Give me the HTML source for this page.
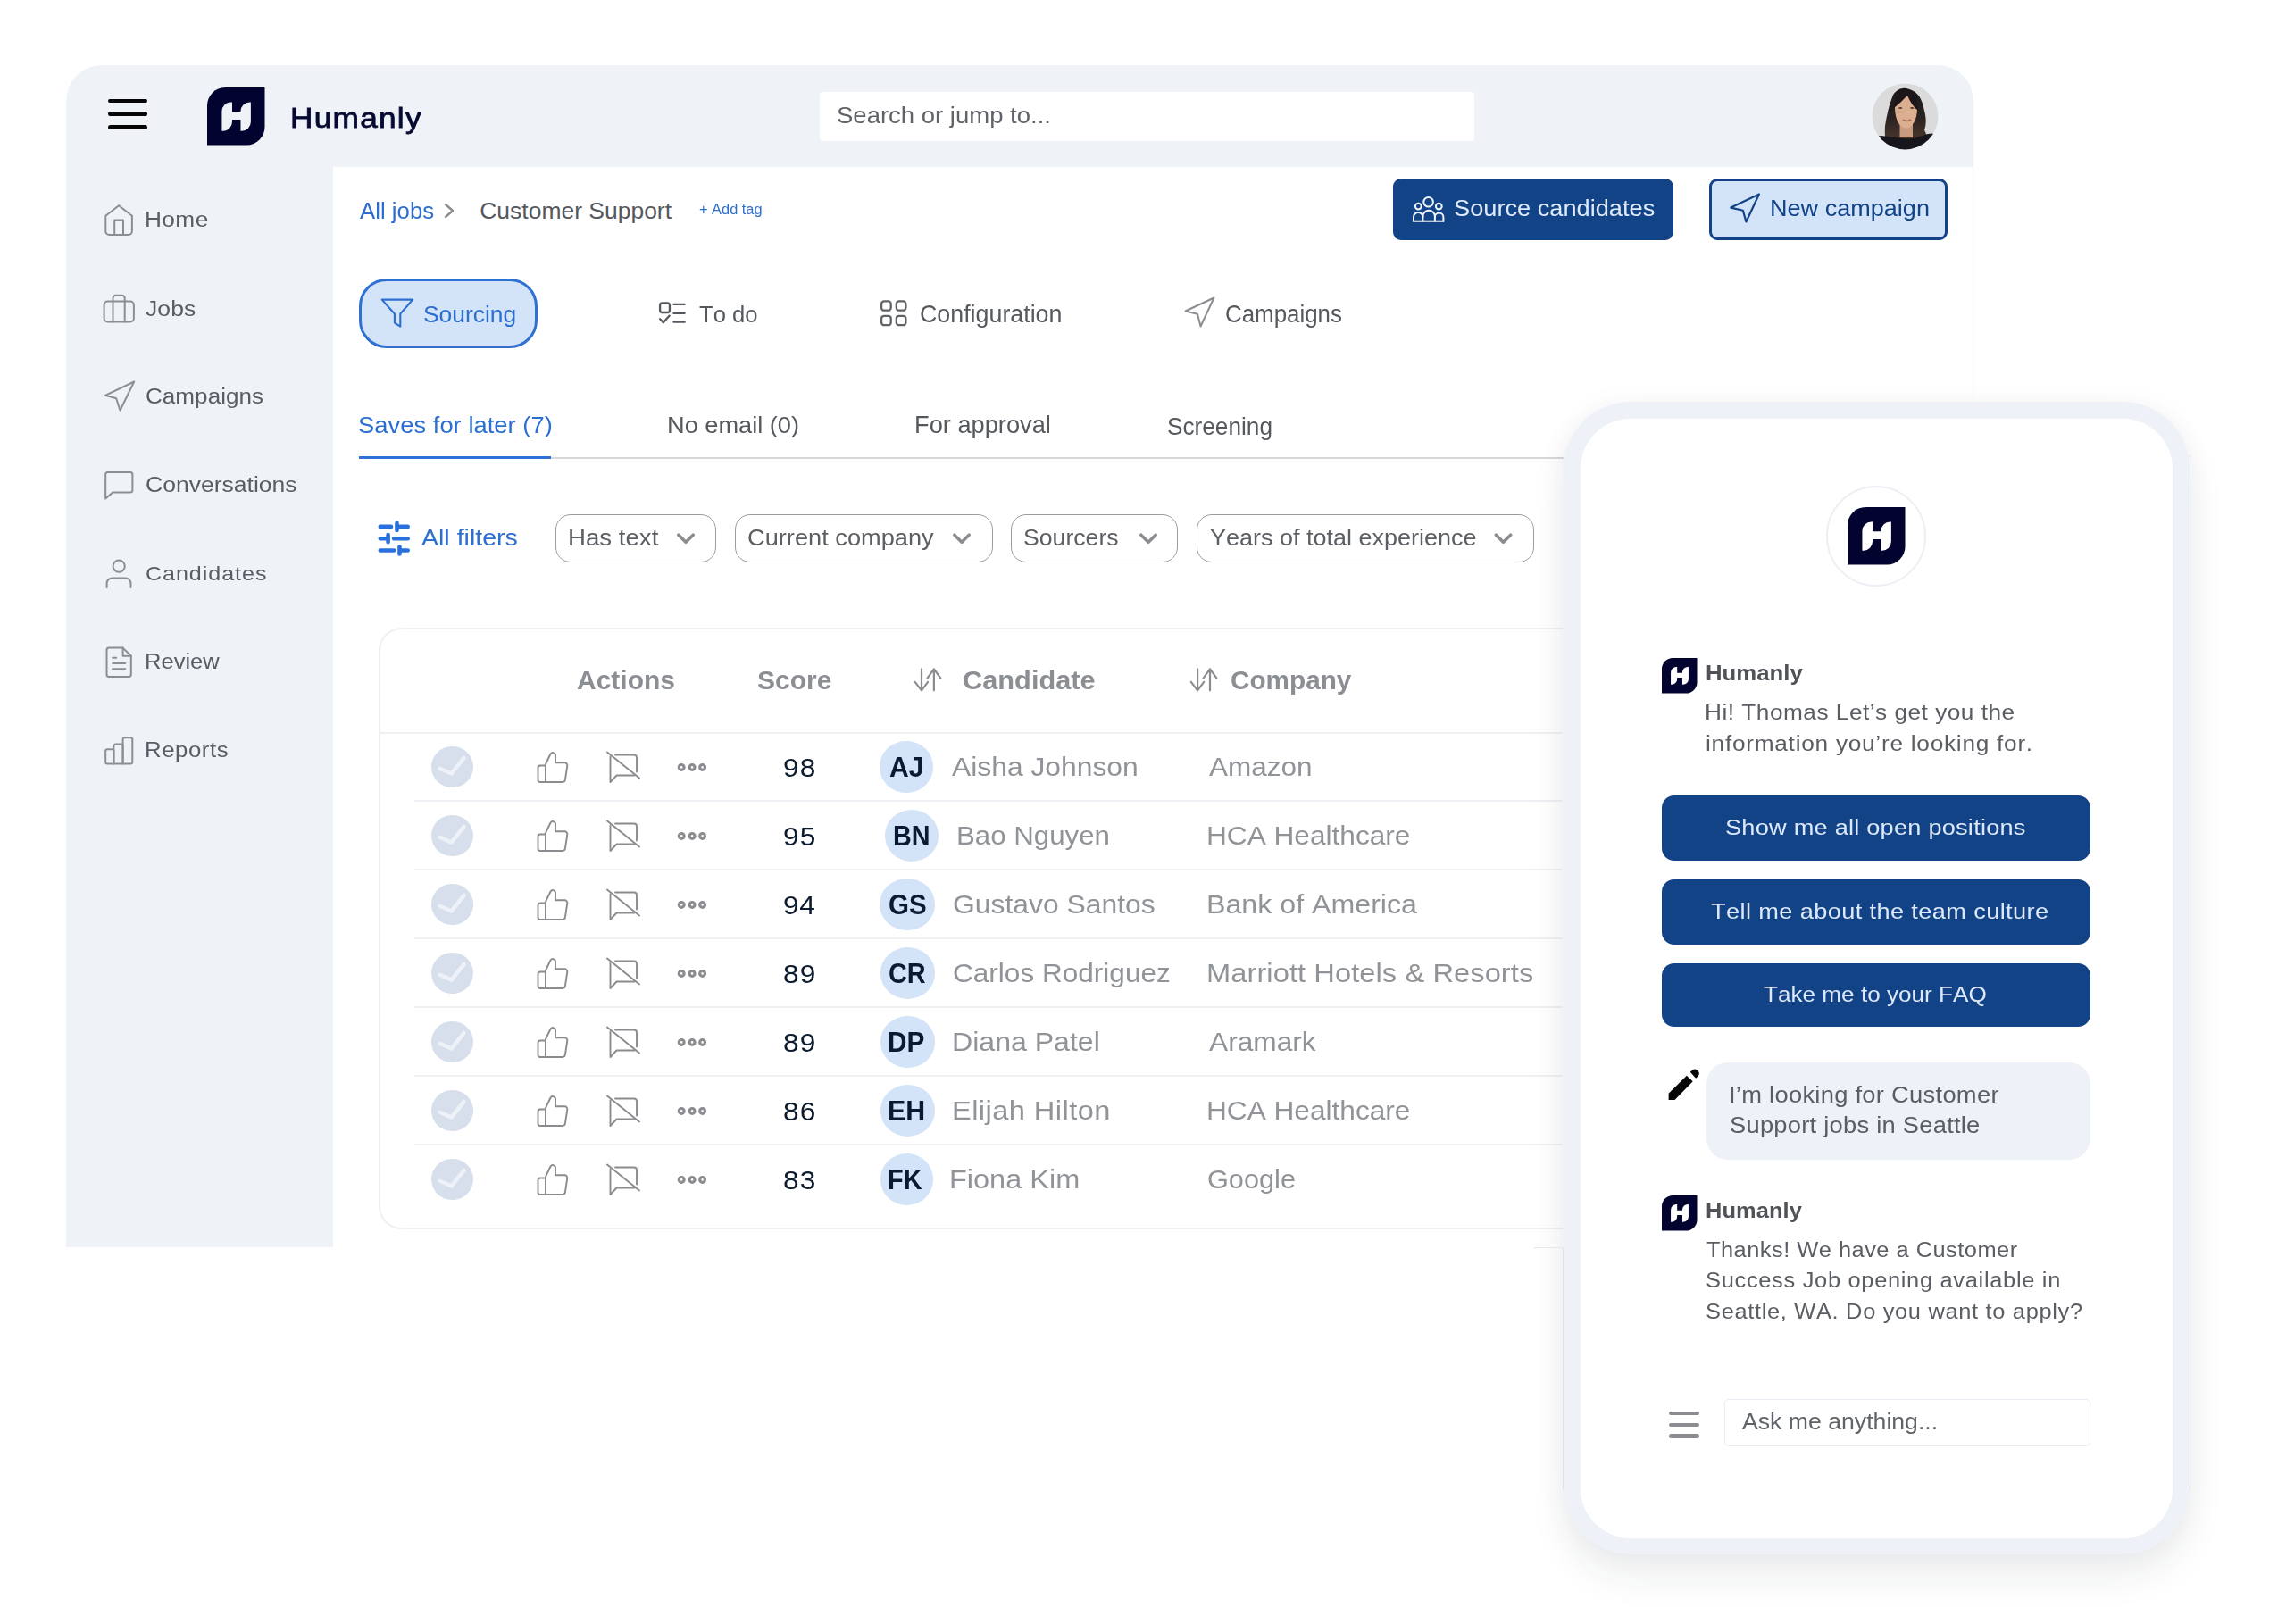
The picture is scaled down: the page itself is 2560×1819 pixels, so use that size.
<!DOCTYPE html>
<html><head><meta charset="utf-8"><title>Humanly</title>
<style>
html,body{margin:0;padding:0;background:#fff;}
body{width:2560px;height:1819px;position:relative;overflow:hidden;font-family:"Liberation Sans",sans-serif;font-kerning:none;}
.t{position:absolute;white-space:nowrap;line-height:1;transform-origin:0 0;}
.r{position:absolute;}
.s{position:absolute;left:0;top:0;overflow:visible;}
</style></head><body>
<div class="r" style="left:73.5px;top:73px;width:2136.0px;height:114px;background:#eff3f8;border-radius:40px 40px 0 0;"></div>
<div class="r" style="left:73.5px;top:186px;width:299.5px;height:1211px;background:#eff3f8;"></div>
<div class="r" style="left:2208.5px;top:187px;width:1.0px;height:263px;background:#f9fafb;"></div>
<div class="r" style="left:120.6px;top:110.6px;width:44.9px;height:4.8px;background:#060606;border-radius:3px;"></div>
<div class="r" style="left:120.6px;top:125.39999999999999px;width:44.9px;height:4.8px;background:#060606;border-radius:3px;"></div>
<div class="r" style="left:120.6px;top:140.4px;width:44.9px;height:4.8px;background:#060606;border-radius:3px;"></div>
<svg class="s" style="left:232.4px;top:98.1px" width="64.5" height="64.5" viewBox="0 0 64 64"><path d="M20 0H64V44A20 20 0 0 1 44 64H0V20A20 20 0 0 1 20 0Z" fill="#03032f"/><path d="M16.3 48.3V26.3A10 10 0 0 1 26.3 16.3H27.8V38.3A10 10 0 0 1 17.8 48.3Z M37.2 48.3V26.3A10 10 0 0 1 47.2 16.3H48.5V38.3A10 10 0 0 1 38.5 48.3Z M27 27.1H38V35.7H27Z" fill="#eff3f8"/></svg>
<div class="t" style="left:324.65px;top:116px;font-size:32.0px;letter-spacing:1.163px;color:#070a30;font-weight:normal;transform:scaleX(1.1);-webkit-text-stroke:0.8px #070a30;">Humanly</div>
<div class="r" style="left:918px;top:103.4px;width:732.7px;height:54.4px;background:#fff;border-radius:4px;"></div>
<div class="t" style="left:936.67px;top:117px;font-size:25.75px;letter-spacing:0.0px;color:#606468;font-weight:normal;transform:scaleX(1.0679);">Search or jump to...</div>
<svg class="s" style="left:2096px;top:93px" width="75" height="75" viewBox="0 0 75 75">
<defs><clipPath id="av"><circle cx="37.5" cy="37.4" r="37"/></clipPath>
<filter id="avb" x="-10%" y="-10%" width="120%" height="120%"><feGaussianBlur stdDeviation="0.55"/></filter>
<linearGradient id="hg" x1="0" y1="0" x2="0" y2="1"><stop offset="0" stop-color="#191719"/><stop offset="0.55" stop-color="#2a2220"/><stop offset="1" stop-color="#4a362d"/></linearGradient></defs>
<g clip-path="url(#av)">
<rect width="75" height="75" fill="#dbdbdb"/>
<g filter="url(#avb)">
<path d="M37 5.8C30 6 25 10 23 16C19 26 17 36 15 48C14.5 56 15 62 16 64L60 64C62 60 61 55 59 53C61.5 46 61 38 59 31C57 20 53 8 37 5.8Z" fill="url(#hg)"/>
<path d="M31.5 44H46V61H31.5Z" fill="#c99b7e"/>
<path d="M26 27C26 20 31 14 38 14C46 14 51 20 51 28C51 40 46 50.6 38.5 50.6C31 50.6 26 40 26 27Z" fill="#dcae90"/>
<path d="M25 28C25 18 30 11 37 10C45 10 51 16 52 24L52 31C47 27 43 21 40 14C35 19 30 24 25 28Z" fill="#1b181a"/>
<ellipse cx="32.2" cy="28" rx="2.2" ry="1.1" fill="#5a3d30"/><ellipse cx="45.3" cy="28" rx="2.2" ry="1.1" fill="#5a3d30"/>
<path d="M35 41Q39.5 44 44 41" stroke="#a86a58" stroke-width="1.6" fill="none"/>
<path d="M0 75V62C4 60 8 59 11 59C18 60 26 61 33 61.8C38 62.5 43 62.5 47.6 61.8C54 60 60 57 67 56.5C70 57 73 59 75 60V75Z" fill="#15171a"/>
</g></g></svg>
<div class="t" style="left:162.3px;top:234px;font-size:23.85px;letter-spacing:0.379px;color:#595d62;font-weight:normal;transform:scaleX(1.1);">Home</div>
<div class="t" style="left:163.45px;top:334px;font-size:24.15px;letter-spacing:0.083px;color:#595d62;font-weight:normal;transform:scaleX(1.1);">Jobs</div>
<div class="t" style="left:162.65px;top:432px;font-size:24.15px;letter-spacing:0.0px;color:#595d62;font-weight:normal;transform:scaleX(1.0813);">Campaigns</div>
<div class="t" style="left:162.63px;top:531px;font-size:24.15px;letter-spacing:0.0px;color:#595d62;font-weight:normal;transform:scaleX(1.0993);">Conversations</div>
<div class="t" style="left:162.93px;top:631px;font-size:22.84px;letter-spacing:0.848px;color:#595d62;font-weight:normal;transform:scaleX(1.1);">Candidates</div>
<div class="t" style="left:162.13px;top:730px;font-size:23.56px;letter-spacing:0.0px;color:#595d62;font-weight:normal;transform:scaleX(1.084);">Review</div>
<div class="t" style="left:162.1px;top:829px;font-size:23.42px;letter-spacing:0.523px;color:#595d62;font-weight:normal;transform:scaleX(1.1);">Reports</div>
<svg class="s" width="2560" height="1819" viewBox="0 0 2560 1819" fill="none" stroke="#8b8e92" stroke-width="2" stroke-linecap="round" stroke-linejoin="round" >
<path d="M118.3 241.7L133.1 230.3L147.9 241.7V259A4 4 0 0 1 143.9 263H122.3A4 4 0 0 1 118.3 259Z"/>
<path d="M128.2 263V246.6H138V263"/>
<rect x="116.6" y="337.5" width="33.3" height="23" rx="4"/>
<path d="M126.5 360.5V334A3.2 3.2 0 0 1 129.7 330.8H136.5A3.2 3.2 0 0 1 139.7 334V360.5"/>
<path d="M150.2 427.5L117.9 442.8L130.2 446.2L134.5 459.8Z"/>
<path d="M118.2 558.6V531.6A2.5 2.5 0 0 1 120.7 529.1H145.9A2.5 2.5 0 0 1 148.4 531.6V549.1A2.5 2.5 0 0 1 145.9 551.6H126.2Z"/>
<circle cx="133.2" cy="634.2" r="6.6"/>
<path d="M119.6 658V653.5A6 6 0 0 1 125.6 647.5H140.5A6 6 0 0 1 146.5 653.5V658"/>
<path d="M137.6 725.6H122A2.5 2.5 0 0 0 119.5 728.1V755.4A2.5 2.5 0 0 0 122 757.9H144.3A2.5 2.5 0 0 0 146.8 755.4V734.8Z"/>
<path d="M137.6 725.6V734.8H146.8"/>
<path d="M126.1 736.7H130.2M126.1 743.1H140.3M126.1 749.2H140.3"/>
<path d="M120.2 855.4A2 2 0 0 1 118.2 853.4V841.2A2 2 0 0 1 120.2 839.2H125.4A2 2 0 0 1 127.4 841.2V855.4Z"/>
<path d="M127.4 855.4V835.6A2 2 0 0 1 129.4 833.6H135.6A2 2 0 0 1 137.6 835.6V855.4Z"/>
<path d="M137.6 855.4V828.2A2 2 0 0 1 139.6 826.2H146.3A2 2 0 0 1 148.3 828.2V853.4A2 2 0 0 1 146.3 855.4Z"/>
</svg>
<div class="t" style="left:402.7px;top:223px;font-size:26.47px;letter-spacing:0.0px;color:#2d6fd0;font-weight:normal;transform:scaleX(0.974);">All jobs</div>
<svg class="s" width="2560" height="1819" viewBox="0 0 2560 1819" fill="none" stroke="#8a8c90" stroke-width="2.4" stroke-linecap="round" stroke-linejoin="round" ><path d="M499 229L507 236L499 243"/></svg>
<div class="t" style="left:537.25px;top:223px;font-size:26.47px;letter-spacing:0.0px;color:#55595e;font-weight:normal;">Customer Support</div>
<div class="t" style="left:783.02px;top:227px;font-size:15.85px;letter-spacing:0.0px;color:#2d6fd0;font-weight:normal;transform:scaleX(1.0333);">+ Add tag</div>
<div class="r" style="left:1560px;top:200px;width:314.4px;height:68.8px;background:#124387;border-radius:9px;"></div>
<svg class="s" width="2560" height="1819" viewBox="0 0 2560 1819" fill="none" stroke="#eef4fb" stroke-width="2" stroke-linecap="round" stroke-linejoin="round" ><circle cx="1599.6" cy="226.2" r="5.3"/><circle cx="1588.3" cy="231.1" r="3.4"/><circle cx="1611.3" cy="231.1" r="3.4"/>
<path d="M1593.4 247.7V242.55A6.75 6.75 0 0 1 1606.9 242.55V247.7"/>
<path d="M1583 247.7V243.2A5.2 5.2 0 0 1 1593.4 243.2"/>
<path d="M1606.9 243.2A4.75 4.75 0 0 1 1616.4 243.2V247.7"/>
<path d="M1583 247.7H1616.4"/></svg>
<div class="t" style="left:1628.39px;top:221px;font-size:25.89px;letter-spacing:0.0px;color:#dfeaf8;font-weight:normal;transform:scaleX(1.0509);">Source candidates</div>
<div class="r" style="left:1914px;top:200px;width:266.8px;height:68.8px;background:#d3e3f8;border:3px solid #124387;border-radius:9px;box-sizing:border-box;"></div>
<svg class="s" width="2560" height="1819" viewBox="0 0 2560 1819" fill="none" stroke="#124387" stroke-width="2.2" stroke-linecap="round" stroke-linejoin="round" ><path d="M1969.9 217.5L1938.3 232.6L1951.9 235.8L1955.4 248.5Z"/></svg>
<div class="t" style="left:1982.49px;top:221px;font-size:25.6px;letter-spacing:0.0px;color:#124387;font-weight:normal;transform:scaleX(1.057);">New campaign</div>
<div class="r" style="left:402px;top:311.7px;width:199.8px;height:78.0px;background:#d3e3f8;border:3px solid #2f70d2;border-radius:31px;box-sizing:border-box;"></div>
<svg class="s" width="2560" height="1819" viewBox="0 0 2560 1819" fill="none" stroke="#2c6fd1" stroke-width="2.1" stroke-linecap="round" stroke-linejoin="round" ><path d="M427.7 335.6H462.2L448.3 351.5V365.6L441.9 361.6V351.5Z"/></svg>
<div class="t" style="left:474.25px;top:339px;font-size:26.47px;letter-spacing:0.0px;color:#2d6fd0;font-weight:normal;transform:scaleX(0.998);">Sourcing</div>
<svg class="s" width="2560" height="1819" viewBox="0 0 2560 1819" fill="none" stroke="#55595e" stroke-width="2.3" stroke-linecap="round" stroke-linejoin="round" ><rect x="739.1" y="339.4" width="10.85" height="10.6" rx="2.5"/>
<path d="M739.1 357.3L742.8 361.3L749.7 353.6"/>
<path d="M754.4 340.8H766.7M754.4 350.8H766.7M754.4 360.7H766.7"/></svg>
<div class="t" style="left:783.32px;top:339px;font-size:26.47px;letter-spacing:0.0px;color:#55595e;font-weight:normal;transform:scaleX(0.9691);">To do</div>
<svg class="s" width="2560" height="1819" viewBox="0 0 2560 1819" fill="none" stroke="#5f6266" stroke-width="2.3" stroke-linecap="round" stroke-linejoin="round" ><rect x="987.1" y="337.4" width="10.6" height="10.3" rx="3"/><rect x="1003.8" y="337.4" width="10.6" height="10.3" rx="3"/>
<rect x="987.1" y="353.8" width="10.6" height="10.4" rx="3"/><rect x="1003.8" y="353.8" width="10.6" height="10.4" rx="3"/></svg>
<div class="t" style="left:1030.15px;top:339px;font-size:26.91px;letter-spacing:0.0px;color:#55595e;font-weight:normal;transform:scaleX(0.9962);">Configuration</div>
<svg class="s" width="2560" height="1819" viewBox="0 0 2560 1819" fill="none" stroke="#8a8c90" stroke-width="2" stroke-linecap="round" stroke-linejoin="round" ><path d="M1359.5 333.5L1327.5 348.5L1341 351.8L1344.5 365.5Z"/></svg>
<div class="t" style="left:1371.7px;top:339px;font-size:26.91px;letter-spacing:0.0px;color:#55595e;font-weight:normal;transform:scaleX(0.9616);">Campaigns</div>
<div class="r" style="left:402px;top:512px;width:1349px;height:2px;background:#d6d7d9;"></div>
<div class="r" style="left:402px;top:511px;width:215px;height:3px;background:#2e70d8;"></div>
<div class="t" style="left:400.92px;top:464px;font-size:24.87px;letter-spacing:0.025px;color:#2d6fd0;font-weight:normal;transform:scaleX(1.1);">Saves for later (7)</div>
<div class="t" style="left:747.41px;top:464px;font-size:24.87px;letter-spacing:0.0px;color:#55595e;font-weight:normal;transform:scaleX(1.0933);">No email (0)</div>
<div class="t" style="left:1024.23px;top:463px;font-size:27.05px;letter-spacing:0.0px;color:#55595e;font-weight:normal;transform:scaleX(1.0068);">For approval</div>
<div class="t" style="left:1307.08px;top:465px;font-size:26.91px;letter-spacing:0.0px;color:#55595e;font-weight:normal;transform:scaleX(0.9738);">Screening</div>
<svg class="s" width="2560" height="1819" viewBox="0 0 2560 1819" fill="none" stroke="#2a70dd" stroke-width="4.6" stroke-linecap="round" stroke-linejoin="round" ><path d="M425.8 589.9H438M444.5 589.9H456.7M444.5 585.8V594"/>
<path d="M425.8 603.3H434.6M441.1 603.3H456.7M434.6 599V607.2"/>
<path d="M425.8 616.5H441.1M447.5 616.5H456.7M447.5 612.6V620.4"/></svg>
<div class="t" style="left:471.8px;top:589px;font-size:26.18px;letter-spacing:0.0px;color:#2d6fd0;font-weight:normal;transform:scaleX(1.0901);">All filters</div>
<div class="r" style="left:622px;top:576.4px;width:180.2px;height:53.6px;border:1.6px solid #9c9c9c;border-radius:17px;box-sizing:border-box;"></div>
<div class="t" style="left:636.03px;top:589px;font-size:26.18px;letter-spacing:0.0px;color:#5c6064;font-weight:normal;transform:scaleX(1.0553);">Has text</div>
<svg class="s" width="2560" height="1819" viewBox="0 0 2560 1819" fill="none" stroke="#8a8c90" stroke-width="3.6" stroke-linecap="round" stroke-linejoin="round" ><path d="M759.8 599.2L768 607.2L776.2 599.2"/></svg>
<div class="r" style="left:822.7px;top:576.4px;width:289.1px;height:53.6px;border:1.6px solid #9c9c9c;border-radius:17px;box-sizing:border-box;"></div>
<div class="t" style="left:837.4px;top:589px;font-size:26.18px;letter-spacing:-0.0px;color:#5c6064;font-weight:normal;transform:scaleX(1.0395);">Current company</div>
<svg class="s" width="2560" height="1819" viewBox="0 0 2560 1819" fill="none" stroke="#8a8c90" stroke-width="3.6" stroke-linecap="round" stroke-linejoin="round" ><path d="M1068.8 599.2L1077 607.2L1085.2 599.2"/></svg>
<div class="r" style="left:1132.1px;top:576.4px;width:187.1px;height:53.6px;border:1.6px solid #9c9c9c;border-radius:17px;box-sizing:border-box;"></div>
<div class="t" style="left:1146.13px;top:589px;font-size:26.18px;letter-spacing:0.0px;color:#5c6064;font-weight:normal;transform:scaleX(1.0175);">Sourcers</div>
<svg class="s" width="2560" height="1819" viewBox="0 0 2560 1819" fill="none" stroke="#8a8c90" stroke-width="3.6" stroke-linecap="round" stroke-linejoin="round" ><path d="M1277.8 599.2L1286 607.2L1294.2 599.2"/></svg>
<div class="r" style="left:1340px;top:576.4px;width:378.2px;height:53.6px;border:1.6px solid #9c9c9c;border-radius:17px;box-sizing:border-box;"></div>
<div class="t" style="left:1354.53px;top:589px;font-size:26.18px;letter-spacing:0.0px;color:#5c6064;font-weight:normal;transform:scaleX(1.0308);">Years of total experience</div>
<svg class="s" width="2560" height="1819" viewBox="0 0 2560 1819" fill="none" stroke="#8a8c90" stroke-width="3.6" stroke-linecap="round" stroke-linejoin="round" ><path d="M1675.3 599.2L1683.5 607.2L1691.7 599.2"/></svg>
<div class="r" style="left:423.9px;top:702.9px;width:1426.1px;height:674.2px;border:2px solid #eef0f4;border-radius:26px;box-sizing:border-box;"></div>
<div class="r" style="left:425px;top:819.5px;width:1324px;height:2.0px;background:#eef0f4;"></div>
<div class="t" style="left:645.72px;top:748px;font-size:28.8px;letter-spacing:0.0px;color:#8b8e92;font-weight:bold;transform:scaleX(1.0415);">Actions</div>
<div class="t" style="left:848.42px;top:748px;font-size:28.8px;letter-spacing:0.0px;color:#8b8e92;font-weight:bold;transform:scaleX(1.0415);">Score</div>
<div class="t" style="left:1078.23px;top:747px;font-size:30.25px;letter-spacing:0.0px;color:#8b8e92;font-weight:bold;transform:scaleX(1.0167);">Candidate</div>
<div class="t" style="left:1378.17px;top:747px;font-size:30.25px;letter-spacing:0.0px;color:#8b8e92;font-weight:bold;transform:scaleX(0.9824);">Company</div>
<svg class="s" width="2560" height="1819" viewBox="0 0 2560 1819" fill="none" stroke="#8a8c90" stroke-width="2.2" stroke-linecap="round" stroke-linejoin="round" ><path d="M1032 749.4V773.3M1024.7 763.8L1032 773.3L1039.1 763.8M1045.9 773.3V749.4M1038.6 759.4L1045.9 749.4L1053.2 759.4"/>
<path d="M1341.1 749.4V773.3M1333.8 763.8L1341.1 773.3L1348.2 763.8M1355 773.3V749.4M1347.7 759.4L1355 749.4L1362.3 759.4"/></svg>
<div class="r" style="left:463.9px;top:896px;width:1285.1px;height:2px;background:#eef0f4;"></div>
<div class="r" style="left:483.3px;top:835.7px;width:46.6px;height:46.6px;border-radius:50%;background:#d6dfeb;"></div>
<svg class="s" width="2560" height="1819" viewBox="0 0 2560 1819" fill="none" stroke="#eef2f8" stroke-width="4.5" stroke-linecap="round" stroke-linejoin="round" ><path d="M492.5 860.8L505.5 866.5L519.5 849" /></svg>
<svg class="s" width="2560" height="1819" viewBox="0 0 2560 1819" fill="none" stroke="#8a8c90" stroke-width="1.9" stroke-linecap="round" stroke-linejoin="round" ><path d="M602.5 860A2.5 2.5 0 0 1 605 857.5H611V876H605A2.5 2.5 0 0 1 602.5 873.5Z"/><path d="M611 876V856L616.5 844.5A3 3 0 0 1 622 846.5V854.3H632.5A2.8 2.8 0 0 1 635.3 857.5L633 873A3.3 3.3 0 0 1 629.7 876Z"/></svg>
<svg class="s" width="2560" height="1819" viewBox="0 0 2560 1819" fill="none" stroke="#8a8c90" stroke-width="1.9" stroke-linecap="round" stroke-linejoin="round" ><path d="M680 842.5L716 871.5"/><path d="M683.5 847.5V876L690.5 868.5H710.5"/><path d="M689 845.5H710A3 3 0 0 1 713 848.5V864.5"/></svg>
<svg class="s" width="2560" height="1819" viewBox="0 0 2560 1819" fill="none" stroke="#8a8c90" stroke-width="3.2" stroke-linecap="round" stroke-linejoin="round" ><circle cx="763.2" cy="859.4" r="2.9"/><circle cx="775.1" cy="859.4" r="2.9"/><circle cx="786.6" cy="859.4" r="2.9"/></svg>
<div class="t" style="left:876.52px;top:846px;font-size:28.8px;letter-spacing:1.136px;color:#0d1b2e;font-weight:normal;transform:scaleX(1.1);">98</div>
<div class="r" style="left:985.4px;top:830.4px;width:59.2px;height:57.2px;border-radius:50%;background:#d3e3f8;"></div>
<div class="t" style="left:995.77px;top:844px;font-size:31.13px;letter-spacing:0.0px;color:#0b1a33;font-weight:bold;transform:scaleX(0.9676);">AJ</div>
<div class="t" style="left:1066.0px;top:844px;font-size:29.67px;letter-spacing:0.0px;color:#909397;font-weight:normal;transform:scaleX(1.0729);">Aisha Johnson</div>
<div class="t" style="left:1353.5px;top:844px;font-size:29.67px;letter-spacing:0.0px;color:#909397;font-weight:normal;transform:scaleX(1.0629);">Amazon</div>
<div class="r" style="left:463.9px;top:973px;width:1285.1px;height:2px;background:#eef0f4;"></div>
<div class="r" style="left:483.3px;top:912.7px;width:46.6px;height:46.6px;border-radius:50%;background:#d6dfeb;"></div>
<svg class="s" width="2560" height="1819" viewBox="0 0 2560 1819" fill="none" stroke="#eef2f8" stroke-width="4.5" stroke-linecap="round" stroke-linejoin="round" ><path d="M492.5 937.8L505.5 943.5L519.5 926" /></svg>
<svg class="s" width="2560" height="1819" viewBox="0 0 2560 1819" fill="none" stroke="#8a8c90" stroke-width="1.9" stroke-linecap="round" stroke-linejoin="round" ><path d="M602.5 937A2.5 2.5 0 0 1 605 934.5H611V953H605A2.5 2.5 0 0 1 602.5 950.5Z"/><path d="M611 953V933L616.5 921.5A3 3 0 0 1 622 923.5V931.3H632.5A2.8 2.8 0 0 1 635.3 934.5L633 950A3.3 3.3 0 0 1 629.7 953Z"/></svg>
<svg class="s" width="2560" height="1819" viewBox="0 0 2560 1819" fill="none" stroke="#8a8c90" stroke-width="1.9" stroke-linecap="round" stroke-linejoin="round" ><path d="M680 919.5L716 948.5"/><path d="M683.5 924.5V953L690.5 945.5H710.5"/><path d="M689 922.5H710A3 3 0 0 1 713 925.5V941.5"/></svg>
<svg class="s" width="2560" height="1819" viewBox="0 0 2560 1819" fill="none" stroke="#8a8c90" stroke-width="3.2" stroke-linecap="round" stroke-linejoin="round" ><circle cx="763.2" cy="936.4" r="2.9"/><circle cx="775.1" cy="936.4" r="2.9"/><circle cx="786.6" cy="936.4" r="2.9"/></svg>
<div class="t" style="left:876.52px;top:923px;font-size:28.8px;letter-spacing:1.136px;color:#0d1b2e;font-weight:normal;transform:scaleX(1.1);">95</div>
<div class="r" style="left:990.8px;top:907.4px;width:60.6px;height:57.2px;border-radius:50%;background:#d3e3f8;"></div>
<div class="t" style="left:1000.35px;top:921px;font-size:31.13px;letter-spacing:0.0px;color:#0b1a33;font-weight:bold;transform:scaleX(0.9244);">BN</div>
<div class="t" style="left:1071.07px;top:921px;font-size:29.67px;letter-spacing:0.0px;color:#909397;font-weight:normal;transform:scaleX(1.0533);">Bao Nguyen</div>
<div class="t" style="left:1350.83px;top:921px;font-size:29.67px;letter-spacing:-0.0px;color:#909397;font-weight:normal;transform:scaleX(1.066);">HCA Healthcare</div>
<div class="r" style="left:463.9px;top:1050px;width:1285.1px;height:2px;background:#eef0f4;"></div>
<div class="r" style="left:483.3px;top:989.7px;width:46.6px;height:46.6px;border-radius:50%;background:#d6dfeb;"></div>
<svg class="s" width="2560" height="1819" viewBox="0 0 2560 1819" fill="none" stroke="#eef2f8" stroke-width="4.5" stroke-linecap="round" stroke-linejoin="round" ><path d="M492.5 1014.8L505.5 1020.5L519.5 1003" /></svg>
<svg class="s" width="2560" height="1819" viewBox="0 0 2560 1819" fill="none" stroke="#8a8c90" stroke-width="1.9" stroke-linecap="round" stroke-linejoin="round" ><path d="M602.5 1014A2.5 2.5 0 0 1 605 1011.5H611V1030H605A2.5 2.5 0 0 1 602.5 1027.5Z"/><path d="M611 1030V1010L616.5 998.5A3 3 0 0 1 622 1000.5V1008.3H632.5A2.8 2.8 0 0 1 635.3 1011.5L633 1027A3.3 3.3 0 0 1 629.7 1030Z"/></svg>
<svg class="s" width="2560" height="1819" viewBox="0 0 2560 1819" fill="none" stroke="#8a8c90" stroke-width="1.9" stroke-linecap="round" stroke-linejoin="round" ><path d="M680 996.5L716 1025.5"/><path d="M683.5 1001.5V1030L690.5 1022.5H710.5"/><path d="M689 999.5H710A3 3 0 0 1 713 1002.5V1018.5"/></svg>
<svg class="s" width="2560" height="1819" viewBox="0 0 2560 1819" fill="none" stroke="#8a8c90" stroke-width="3.2" stroke-linecap="round" stroke-linejoin="round" ><circle cx="763.2" cy="1013.4" r="2.9"/><circle cx="775.1" cy="1013.4" r="2.9"/><circle cx="786.6" cy="1013.4" r="2.9"/></svg>
<div class="t" style="left:876.52px;top:1000px;font-size:28.8px;letter-spacing:0.636px;color:#0d1b2e;font-weight:normal;transform:scaleX(1.1);">94</div>
<div class="r" style="left:985.4px;top:984.4px;width:61.4px;height:57.2px;border-radius:50%;background:#d3e3f8;"></div>
<div class="t" style="left:994.62px;top:998px;font-size:31.13px;letter-spacing:0.0px;color:#0b1a33;font-weight:bold;transform:scaleX(0.9474);">GS</div>
<div class="t" style="left:1066.89px;top:998px;font-size:29.67px;letter-spacing:-0.0px;color:#909397;font-weight:normal;transform:scaleX(1.0742);">Gustavo Santos</div>
<div class="t" style="left:1350.79px;top:998px;font-size:29.67px;letter-spacing:-0.0px;color:#909397;font-weight:normal;transform:scaleX(1.0846);">Bank of America</div>
<div class="r" style="left:463.9px;top:1127px;width:1285.1px;height:2px;background:#eef0f4;"></div>
<div class="r" style="left:483.3px;top:1066.7px;width:46.6px;height:46.6px;border-radius:50%;background:#d6dfeb;"></div>
<svg class="s" width="2560" height="1819" viewBox="0 0 2560 1819" fill="none" stroke="#eef2f8" stroke-width="4.5" stroke-linecap="round" stroke-linejoin="round" ><path d="M492.5 1091.8L505.5 1097.5L519.5 1080" /></svg>
<svg class="s" width="2560" height="1819" viewBox="0 0 2560 1819" fill="none" stroke="#8a8c90" stroke-width="1.9" stroke-linecap="round" stroke-linejoin="round" ><path d="M602.5 1091A2.5 2.5 0 0 1 605 1088.5H611V1107H605A2.5 2.5 0 0 1 602.5 1104.5Z"/><path d="M611 1107V1087L616.5 1075.5A3 3 0 0 1 622 1077.5V1085.3H632.5A2.8 2.8 0 0 1 635.3 1088.5L633 1104A3.3 3.3 0 0 1 629.7 1107Z"/></svg>
<svg class="s" width="2560" height="1819" viewBox="0 0 2560 1819" fill="none" stroke="#8a8c90" stroke-width="1.9" stroke-linecap="round" stroke-linejoin="round" ><path d="M680 1073.5L716 1102.5"/><path d="M683.5 1078.5V1107L690.5 1099.5H710.5"/><path d="M689 1076.5H710A3 3 0 0 1 713 1079.5V1095.5"/></svg>
<svg class="s" width="2560" height="1819" viewBox="0 0 2560 1819" fill="none" stroke="#8a8c90" stroke-width="3.2" stroke-linecap="round" stroke-linejoin="round" ><circle cx="763.2" cy="1090.4" r="2.9"/><circle cx="775.1" cy="1090.4" r="2.9"/><circle cx="786.6" cy="1090.4" r="2.9"/></svg>
<div class="t" style="left:876.52px;top:1077px;font-size:28.8px;letter-spacing:1.136px;color:#0d1b2e;font-weight:normal;transform:scaleX(1.1);">89</div>
<div class="r" style="left:985.5px;top:1061.4px;width:61.3px;height:57.2px;border-radius:50%;background:#d3e3f8;"></div>
<div class="t" style="left:994.84px;top:1075px;font-size:31.13px;letter-spacing:0.0px;color:#0b1a33;font-weight:bold;transform:scaleX(0.9279);">CR</div>
<div class="t" style="left:1066.9px;top:1075px;font-size:29.67px;letter-spacing:0.0px;color:#909397;font-weight:normal;transform:scaleX(1.0639);">Carlos Rodriguez</div>
<div class="t" style="left:1350.75px;top:1075px;font-size:29.67px;letter-spacing:0.071px;color:#909397;font-weight:normal;transform:scaleX(1.1);">Marriott Hotels &amp; Resorts</div>
<div class="r" style="left:463.9px;top:1204px;width:1285.1px;height:2px;background:#eef0f4;"></div>
<div class="r" style="left:483.3px;top:1143.7px;width:46.6px;height:46.6px;border-radius:50%;background:#d6dfeb;"></div>
<svg class="s" width="2560" height="1819" viewBox="0 0 2560 1819" fill="none" stroke="#eef2f8" stroke-width="4.5" stroke-linecap="round" stroke-linejoin="round" ><path d="M492.5 1168.8L505.5 1174.5L519.5 1157" /></svg>
<svg class="s" width="2560" height="1819" viewBox="0 0 2560 1819" fill="none" stroke="#8a8c90" stroke-width="1.9" stroke-linecap="round" stroke-linejoin="round" ><path d="M602.5 1168A2.5 2.5 0 0 1 605 1165.5H611V1184H605A2.5 2.5 0 0 1 602.5 1181.5Z"/><path d="M611 1184V1164L616.5 1152.5A3 3 0 0 1 622 1154.5V1162.3H632.5A2.8 2.8 0 0 1 635.3 1165.5L633 1181A3.3 3.3 0 0 1 629.7 1184Z"/></svg>
<svg class="s" width="2560" height="1819" viewBox="0 0 2560 1819" fill="none" stroke="#8a8c90" stroke-width="1.9" stroke-linecap="round" stroke-linejoin="round" ><path d="M680 1150.5L716 1179.5"/><path d="M683.5 1155.5V1184L690.5 1176.5H710.5"/><path d="M689 1153.5H710A3 3 0 0 1 713 1156.5V1172.5"/></svg>
<svg class="s" width="2560" height="1819" viewBox="0 0 2560 1819" fill="none" stroke="#8a8c90" stroke-width="3.2" stroke-linecap="round" stroke-linejoin="round" ><circle cx="763.2" cy="1167.4" r="2.9"/><circle cx="775.1" cy="1167.4" r="2.9"/><circle cx="786.6" cy="1167.4" r="2.9"/></svg>
<div class="t" style="left:876.52px;top:1154px;font-size:28.8px;letter-spacing:1.136px;color:#0d1b2e;font-weight:normal;transform:scaleX(1.1);">89</div>
<div class="r" style="left:985.5px;top:1138.4px;width:61.3px;height:57.2px;border-radius:50%;background:#d3e3f8;"></div>
<div class="t" style="left:994.09px;top:1152px;font-size:31.13px;letter-spacing:0.0px;color:#0b1a33;font-weight:bold;transform:scaleX(0.9565);">DP</div>
<div class="t" style="left:1065.8px;top:1152px;font-size:29.67px;letter-spacing:0.0px;color:#909397;font-weight:normal;transform:scaleX(1.0816);">Diana Patel</div>
<div class="t" style="left:1353.5px;top:1152px;font-size:29.67px;letter-spacing:-0.0px;color:#909397;font-weight:normal;transform:scaleX(1.0682);">Aramark</div>
<div class="r" style="left:463.9px;top:1281px;width:1285.1px;height:2px;background:#eef0f4;"></div>
<div class="r" style="left:483.3px;top:1220.7px;width:46.6px;height:46.6px;border-radius:50%;background:#d6dfeb;"></div>
<svg class="s" width="2560" height="1819" viewBox="0 0 2560 1819" fill="none" stroke="#eef2f8" stroke-width="4.5" stroke-linecap="round" stroke-linejoin="round" ><path d="M492.5 1245.8L505.5 1251.5L519.5 1234" /></svg>
<svg class="s" width="2560" height="1819" viewBox="0 0 2560 1819" fill="none" stroke="#8a8c90" stroke-width="1.9" stroke-linecap="round" stroke-linejoin="round" ><path d="M602.5 1245A2.5 2.5 0 0 1 605 1242.5H611V1261H605A2.5 2.5 0 0 1 602.5 1258.5Z"/><path d="M611 1261V1241L616.5 1229.5A3 3 0 0 1 622 1231.5V1239.3H632.5A2.8 2.8 0 0 1 635.3 1242.5L633 1258A3.3 3.3 0 0 1 629.7 1261Z"/></svg>
<svg class="s" width="2560" height="1819" viewBox="0 0 2560 1819" fill="none" stroke="#8a8c90" stroke-width="1.9" stroke-linecap="round" stroke-linejoin="round" ><path d="M680 1227.5L716 1256.5"/><path d="M683.5 1232.5V1261L690.5 1253.5H710.5"/><path d="M689 1230.5H710A3 3 0 0 1 713 1233.5V1249.5"/></svg>
<svg class="s" width="2560" height="1819" viewBox="0 0 2560 1819" fill="none" stroke="#8a8c90" stroke-width="3.2" stroke-linecap="round" stroke-linejoin="round" ><circle cx="763.2" cy="1244.4" r="2.9"/><circle cx="775.1" cy="1244.4" r="2.9"/><circle cx="786.6" cy="1244.4" r="2.9"/></svg>
<div class="t" style="left:876.52px;top:1231px;font-size:28.8px;letter-spacing:1.136px;color:#0d1b2e;font-weight:normal;transform:scaleX(1.1);">86</div>
<div class="r" style="left:985.5px;top:1215.4px;width:61.3px;height:57.2px;border-radius:50%;background:#d3e3f8;"></div>
<div class="t" style="left:994.05px;top:1229px;font-size:31.13px;letter-spacing:0.0px;color:#0b1a33;font-weight:bold;transform:scaleX(0.9732);">EH</div>
<div class="t" style="left:1065.75px;top:1229px;font-size:29.67px;letter-spacing:0.392px;color:#909397;font-weight:normal;transform:scaleX(1.1);">Elijah Hilton</div>
<div class="t" style="left:1350.83px;top:1229px;font-size:29.67px;letter-spacing:-0.0px;color:#909397;font-weight:normal;transform:scaleX(1.066);">HCA Healthcare</div>
<div class="r" style="left:483.3px;top:1297.7px;width:46.6px;height:46.6px;border-radius:50%;background:#d6dfeb;"></div>
<svg class="s" width="2560" height="1819" viewBox="0 0 2560 1819" fill="none" stroke="#eef2f8" stroke-width="4.5" stroke-linecap="round" stroke-linejoin="round" ><path d="M492.5 1322.8L505.5 1328.5L519.5 1311" /></svg>
<svg class="s" width="2560" height="1819" viewBox="0 0 2560 1819" fill="none" stroke="#8a8c90" stroke-width="1.9" stroke-linecap="round" stroke-linejoin="round" ><path d="M602.5 1322A2.5 2.5 0 0 1 605 1319.5H611V1338H605A2.5 2.5 0 0 1 602.5 1335.5Z"/><path d="M611 1338V1318L616.5 1306.5A3 3 0 0 1 622 1308.5V1316.3H632.5A2.8 2.8 0 0 1 635.3 1319.5L633 1335A3.3 3.3 0 0 1 629.7 1338Z"/></svg>
<svg class="s" width="2560" height="1819" viewBox="0 0 2560 1819" fill="none" stroke="#8a8c90" stroke-width="1.9" stroke-linecap="round" stroke-linejoin="round" ><path d="M680 1304.5L716 1333.5"/><path d="M683.5 1309.5V1338L690.5 1330.5H710.5"/><path d="M689 1307.5H710A3 3 0 0 1 713 1310.5V1326.5"/></svg>
<svg class="s" width="2560" height="1819" viewBox="0 0 2560 1819" fill="none" stroke="#8a8c90" stroke-width="3.2" stroke-linecap="round" stroke-linejoin="round" ><circle cx="763.2" cy="1321.4" r="2.9"/><circle cx="775.1" cy="1321.4" r="2.9"/><circle cx="786.6" cy="1321.4" r="2.9"/></svg>
<div class="t" style="left:876.52px;top:1308px;font-size:28.8px;letter-spacing:1.136px;color:#0d1b2e;font-weight:normal;transform:scaleX(1.1);">83</div>
<div class="r" style="left:985.5px;top:1292.4px;width:59.2px;height:57.2px;border-radius:50%;background:#d3e3f8;"></div>
<div class="t" style="left:994.15px;top:1306px;font-size:31.13px;letter-spacing:0.0px;color:#0b1a33;font-weight:bold;transform:scaleX(0.9274);">FK</div>
<div class="t" style="left:1063.26px;top:1306px;font-size:29.67px;letter-spacing:0.0px;color:#909397;font-weight:normal;transform:scaleX(1.095);">Fiona Kim</div>
<div class="t" style="left:1351.95px;top:1306px;font-size:29.67px;letter-spacing:0.0px;color:#909397;font-weight:normal;transform:scaleX(1.0349);">Google</div>
<div class="r" style="left:1750.7px;top:449.5px;width:701.7px;height:1291.7px;border-radius:75px;background:#eef2f8;box-shadow:0 24px 40px rgba(30,35,45,0.08), 0 0 32px rgba(30,40,60,0.04);"></div>
<div class="r" style="left:1749.5px;top:1397px;width:1.2px;height:271px;background:#dcdfe3;"></div>
<div class="r" style="left:2452.2px;top:510px;width:1.0px;height:1158px;background:#dcdfe3;"></div>
<div class="r" style="left:1718px;top:1396.5px;width:32px;height:1.0px;background:#e6e8ec;"></div>
<div class="r" style="left:1769.5px;top:469.3px;width:663px;height:1253.5px;border-radius:56px;background:#fff;"></div>
<div class="r" style="left:2044.7px;top:544.2px;width:112.7px;height:112.7px;border-radius:50%;border:2px solid #eceff4;box-sizing:border-box;background:#fff;"></div>
<svg class="s" style="left:2068.5px;top:568px" width="64.5" height="64.5" viewBox="0 0 64 64"><path d="M20 0H64V44A20 20 0 0 1 44 64H0V20A20 20 0 0 1 20 0Z" fill="#03032f"/><path d="M16.3 48.3V26.3A10 10 0 0 1 26.3 16.3H27.8V38.3A10 10 0 0 1 17.8 48.3Z M37.2 48.3V26.3A10 10 0 0 1 47.2 16.3H48.5V38.3A10 10 0 0 1 38.5 48.3Z M27 27.1H38V35.7H27Z" fill="#ffffff"/></svg>
<svg class="s" style="left:1860.8px;top:737.1px" width="39.5" height="39.5" viewBox="0 0 64 64"><path d="M20 0H64V44A20 20 0 0 1 44 64H0V20A20 20 0 0 1 20 0Z" fill="#03032f"/><path d="M16.3 48.3V26.3A10 10 0 0 1 26.3 16.3H27.8V38.3A10 10 0 0 1 17.8 48.3Z M37.2 48.3V26.3A10 10 0 0 1 47.2 16.3H48.5V38.3A10 10 0 0 1 38.5 48.3Z M27 27.1H38V35.7H27Z" fill="#ffffff"/></svg>
<div class="t" style="left:1909.93px;top:742px;font-size:24.58px;letter-spacing:0.0px;color:#4f5358;font-weight:bold;transform:scaleX(1.0477);">Humanly</div>
<div class="t" style="left:1909.3px;top:786px;font-size:23.85px;letter-spacing:0.449px;color:#5a5e63;font-weight:normal;transform:scaleX(1.1);">Hi! Thomas Let’s get you the</div>
<div class="t" style="left:1909.85px;top:821px;font-size:23.85px;letter-spacing:0.67px;color:#5a5e63;font-weight:normal;transform:scaleX(1.1);">information you’re looking for.</div>
<div class="r" style="left:1860.8px;top:890.6px;width:480.2px;height:73.9px;background:#124387;border-radius:14px;"></div>
<div class="t" style="left:1932.22px;top:915px;font-size:24.73px;letter-spacing:0.197px;color:#dde9f8;font-weight:normal;transform:scaleX(1.1);">Show me all open positions</div>
<div class="r" style="left:1860.8px;top:984.6px;width:480.2px;height:73.7px;background:#124387;border-radius:14px;"></div>
<div class="t" style="left:1915.85px;top:1009px;font-size:24.73px;letter-spacing:0.338px;color:#dde9f8;font-weight:normal;transform:scaleX(1.1);">Tell me about the team culture</div>
<div class="r" style="left:1860.8px;top:1078.9px;width:480.2px;height:71.3px;background:#124387;border-radius:14px;"></div>
<div class="t" style="left:1975.47px;top:1102px;font-size:24.73px;letter-spacing:-0.0px;color:#dde9f8;font-weight:normal;transform:scaleX(1.0569);">Take me to your FAQ</div>
<svg class="s" width="2560" height="1819" viewBox="0 0 2560 1819" fill="#050505" stroke="none" stroke-width="2" stroke-linecap="round" stroke-linejoin="round" ><path d="M1868.6 1224.8L1888.9 1204.8L1895.7 1211.2L1875.5 1231.9H1868.6Z"/><path d="M1892.8 1200.8L1899.1 1207.7L1901.5 1205.5A4.7 4.7 0 0 0 1895.2 1198.6Z"/></svg>
<div class="r" style="left:1911px;top:1190px;width:429.5px;height:108.6px;background:#eef1f7;border-radius:24px;"></div>
<div class="t" style="left:1936.22px;top:1214px;font-size:24.87px;letter-spacing:0.243px;color:#5a5e63;font-weight:normal;transform:scaleX(1.1);">I’m looking for Customer</div>
<div class="t" style="left:1937.32px;top:1248px;font-size:24.87px;letter-spacing:0.214px;color:#5a5e63;font-weight:normal;transform:scaleX(1.1);">Support jobs in Seattle</div>
<svg class="s" style="left:1860.8px;top:1338.5px" width="39.5" height="39.5" viewBox="0 0 64 64"><path d="M20 0H64V44A20 20 0 0 1 44 64H0V20A20 20 0 0 1 20 0Z" fill="#03032f"/><path d="M16.3 48.3V26.3A10 10 0 0 1 26.3 16.3H27.8V38.3A10 10 0 0 1 17.8 48.3Z M37.2 48.3V26.3A10 10 0 0 1 47.2 16.3H48.5V38.3A10 10 0 0 1 38.5 48.3Z M27 27.1H38V35.7H27Z" fill="#ffffff"/></svg>
<div class="t" style="left:1909.85px;top:1345px;font-size:23.13px;letter-spacing:0.068px;color:#4f5358;font-weight:bold;transform:scaleX(1.1);">Humanly</div>
<div class="t" style="left:1910.95px;top:1389px;font-size:23.13px;letter-spacing:0.425px;color:#5a5e63;font-weight:normal;transform:scaleX(1.1);">Thanks! We have a Customer</div>
<div class="t" style="left:1910.4px;top:1423px;font-size:23.13px;letter-spacing:0.62px;color:#5a5e63;font-weight:normal;transform:scaleX(1.1);">Success Job opening available in</div>
<div class="t" style="left:1910.4px;top:1458px;font-size:23.13px;letter-spacing:0.605px;color:#5a5e63;font-weight:normal;transform:scaleX(1.1);">Seattle, WA. Do you want to apply?</div>
<div class="r" style="left:1868.5px;top:1580.6px;width:34.3px;height:4.8px;background:#8a8c90;border-radius:3px;"></div>
<div class="r" style="left:1868.5px;top:1593.6px;width:34.3px;height:4.8px;background:#8a8c90;border-radius:3px;"></div>
<div class="r" style="left:1868.5px;top:1606.3px;width:34.3px;height:4.8px;background:#8a8c90;border-radius:3px;"></div>
<div class="r" style="left:1931px;top:1567px;width:409.5px;height:52.8px;border:1.6px solid #e8ecf2;border-radius:5px;box-sizing:border-box;"></div>
<div class="t" style="left:1951.0px;top:1580px;font-size:25.89px;letter-spacing:0.0px;color:#606468;font-weight:normal;transform:scaleX(1.0295);">Ask me anything...</div>
</body></html>
